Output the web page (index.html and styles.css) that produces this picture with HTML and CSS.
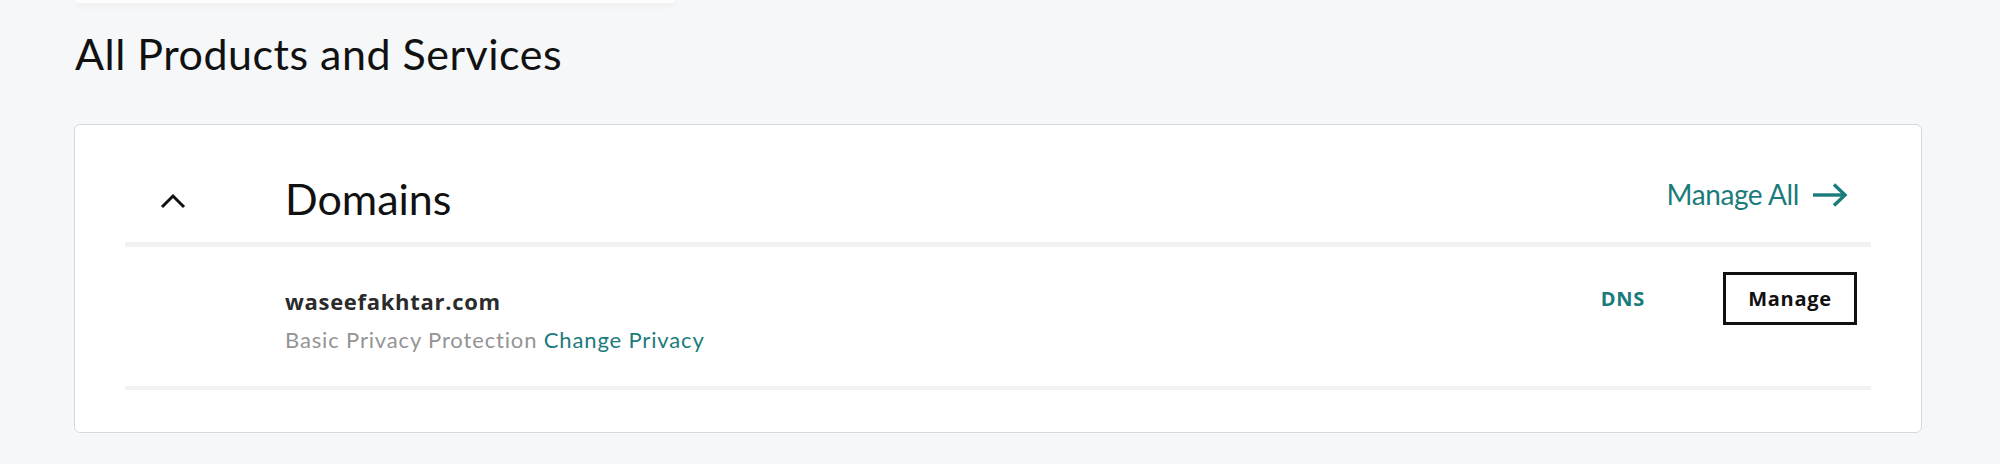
FILE: index.html
```html
<!DOCTYPE html>
<html lang="en">
<head>
<meta charset="utf-8">
<title>All Products and Services</title>
<link rel="stylesheet" href="styles.css">
</head>
<body>
<div class="page">
  <div class="top-card"></div>
  <h2 class="page-title">All Products and Services</h2>
  <section class="card">
    <div class="group-header">
      <button class="toggle" aria-label="Collapse">
        <svg class="chevron" width="26" height="16" viewBox="0 0 26 16"><polyline points="2,14 13,3 24,14" fill="none" stroke="#111" stroke-width="3"/></svg>
      </button>
      <h3 class="group-title">Domains</h3>
      <a class="manage-all" href="#">Manage All
        <svg class="arrow" width="35" height="24" viewBox="0 0 35 24"><line x1="0" y1="12" x2="32" y2="12" stroke="#1b7b7b" stroke-width="3.4"/><polyline points="21,1.5 32,12 21,22.5" fill="none" stroke="#1b7b7b" stroke-width="3.4"/></svg>
      </a>
    </div>
    <div class="product-row">
      <div class="product-info">
        <div class="domain-name">waseefakhtar.com</div>
        <div class="domain-sub">Basic Privacy Protection <a class="link" href="#">Change Privacy</a></div>
      </div>
      <div class="actions">
        <a class="dns" href="#">DNS</a>
        <button class="manage-btn">Manage</button>
      </div>
    </div>
  </section>
</div>
</body>
</html>
```

FILE: styles.css
```css
* { box-sizing: border-box; }
html, body { margin: 0; padding: 0; }
body {
  background: #f5f7f8;
  font-family: Lato, "Noto Sans", Arial, sans-serif;
  color: #111;
}
.page {
  padding: 0 78px 0 74px;
}
.top-card {
  width: 600px;
  height: 3px;
  margin-left: 1px;
  background: #fdfdfd;
  border-radius: 0 0 10px 10px;
  box-shadow: 0 2px 6px rgba(0, 0, 0, 0.07);
}
.page-title {
  margin: 25px 0 44px 1px;
  font-size: 43px;
  line-height: 52px;
  font-weight: 400;
  letter-spacing: 0.5px;
  color: #111;
}
.card {
  background: #fff;
  border: 1px solid #d4dbe0;
  border-radius: 6px;
  padding: 0 50px 42px 50px;
}
.group-header {
  display: flex;
  align-items: flex-start;
  padding: 48px 0 17px 0;
  border-bottom: 5px solid #f2f2f2;
}
.toggle {
  width: 160px;
  padding: 0 0 0 35px;
  margin: 20px 0 0 0;
  border: 0;
  background: none;
  display: flex;
  justify-content: flex-start;
}
.chevron { display: block; }
.group-title {
  flex: 1;
  margin: 0;
  font-size: 43px;
  line-height: 52px;
  font-weight: 400;
  color: #111;
}
.manage-all {
  display: flex;
  align-items: center;
  gap: 14px;
  margin: 4px 23px 0 0;
  font-size: 28px;
  line-height: 34px;
  letter-spacing: -0.4px;
  color: #1b7b7b;
  text-decoration: none;
}
.arrow { display: block; margin-top: 2px; }
.product-row {
  display: flex;
  align-items: flex-start;
  padding: 40px 14px 32px 160px;
  border-bottom: 4px solid #f2f2f2;
}
.product-info { flex: 1; }
.domain-name {
  font-family: "Open Sans", Lato, sans-serif;
  font-size: 22px;
  line-height: 28px;
  font-weight: 700;
  letter-spacing: 0.7px;
  color: #2b2b2b;
}
.domain-sub {
  margin-top: 11px;
  font-size: 22px;
  line-height: 28px;
  letter-spacing: 0.85px;
  color: #949494;
}
.link {
  color: #1b7b7b;
  text-decoration: none;
}
.actions {
  display: flex;
  align-items: center;
  gap: 78px;
  margin-top: -15px;
}
.dns {
  font-family: "Open Sans", Lato, sans-serif;
  font-size: 20px;
  font-weight: 700;
  letter-spacing: 0.7px;
  color: #1b7b7b;
  text-decoration: none;
}
.manage-btn {
  width: 134px;
  height: 53px;
  border: 3px solid #111;
  background: #fff;
  font-family: "Open Sans", Lato, sans-serif;
  font-size: 20px;
  font-weight: 700;
  letter-spacing: 0.7px;
  color: #111;
  padding: 0;
}
```
